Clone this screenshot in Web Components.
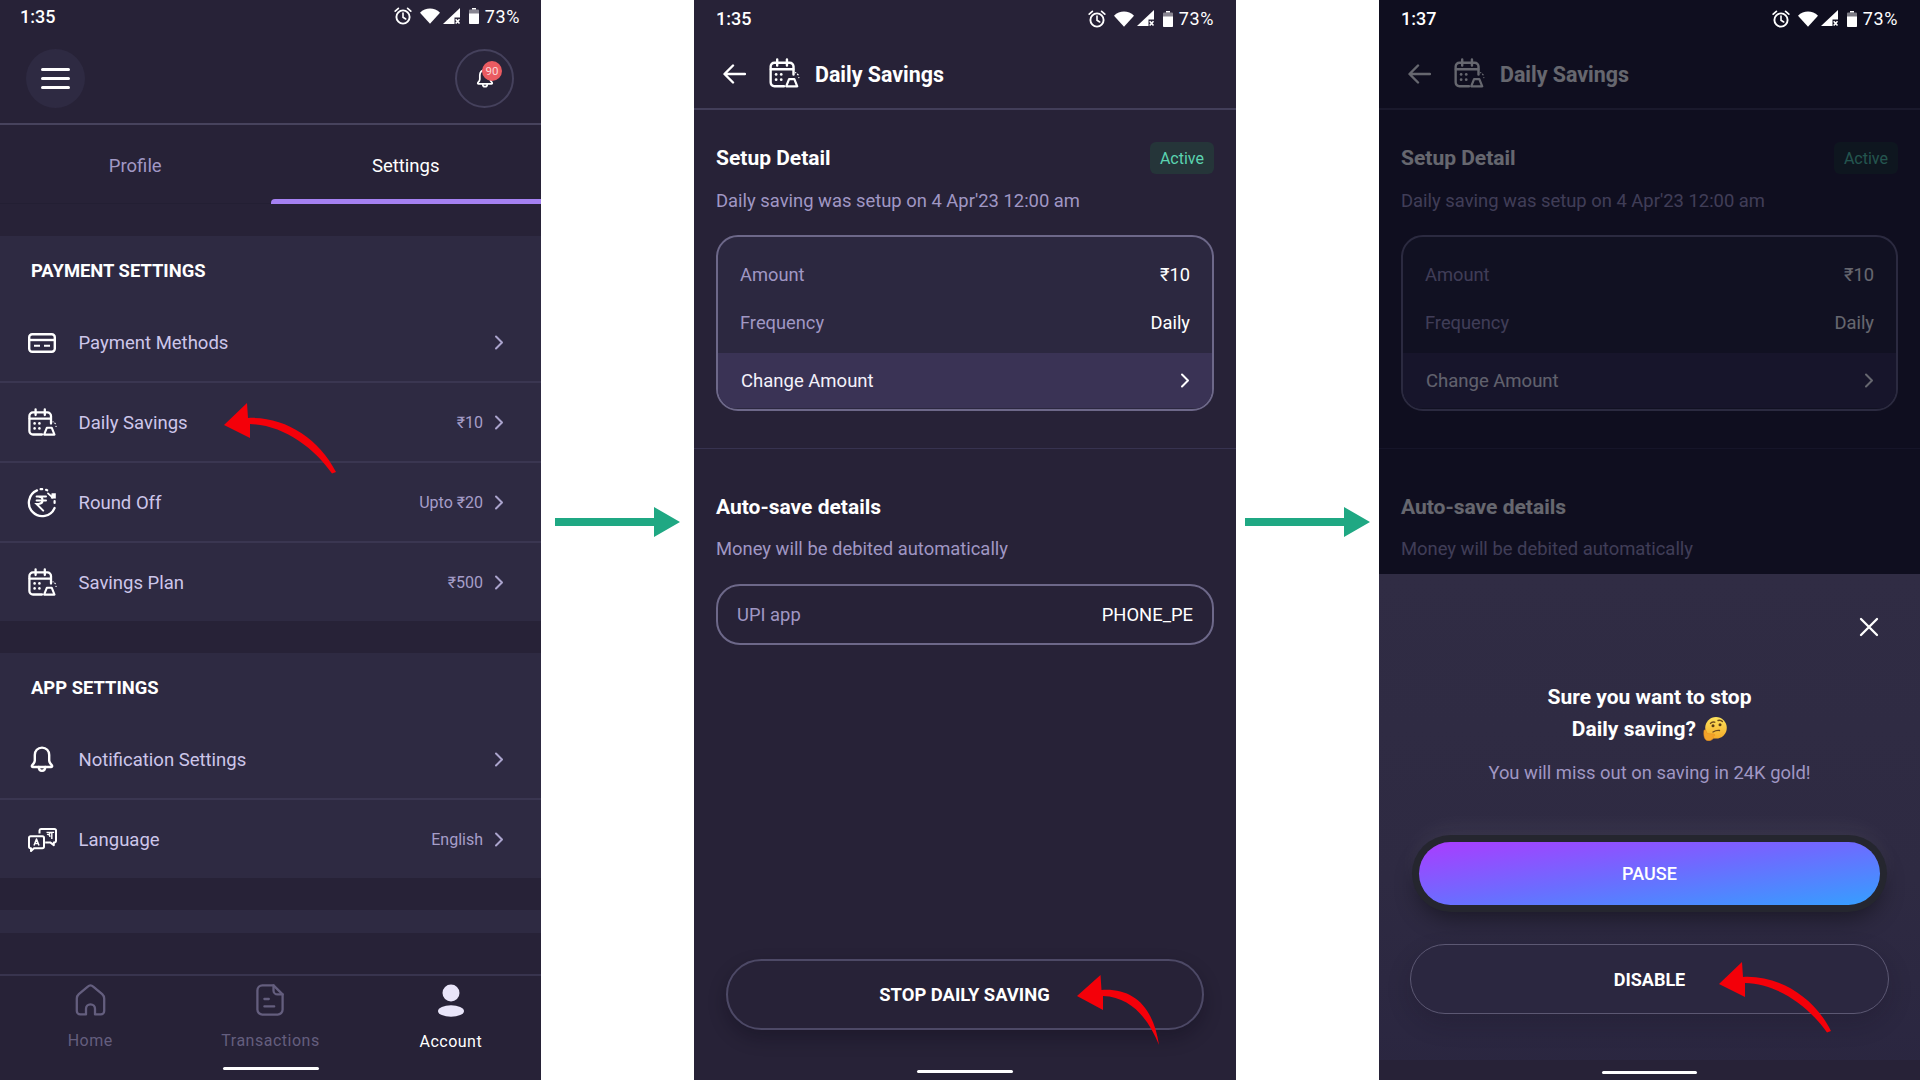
<!DOCTYPE html>
<html>
<head>
<meta charset="utf-8">
<title>Daily Savings</title>
<style>
  html, body { margin: 0; height: 1080px; overflow: hidden; background: #fff; font-family: Roboto, "Noto Sans", sans-serif; }
  .page { display: flex; width: 1920px; height: 1080px; }
</style>
</head>
<body>
<div class="page">
  <settings-screen></settings-screen>
  <flow-arrow style="width:153px"></flow-arrow>
  <savings-screen time="1:35" style="width:542px">
    <red-arrow style="left:383px;top:975px" kind="thin"></red-arrow>
  </savings-screen>
  <flow-arrow style="width:143px"></flow-arrow>
  <savings-screen time="1:37" dimmed style="width:541px">
    <stop-sheet slot="sheet"></stop-sheet>
    <red-arrow style="left:340px;top:962px"></red-arrow>
  </savings-screen>
</div>

<script>
// inline icons, all drawn on their own viewBox
const ICONS = {
  card: `<svg viewBox="0 0 28 20" width="28" height="20" fill="none" stroke="currentColor" stroke-width="2.4"><rect x="1.2" y="1.2" width="25.6" height="17.6" rx="3"/><path d="M1.2 7h25.6"/><path d="M6 12.8h6M16 12.8h6" stroke-width="2"/></svg>`,
  cal: `<svg viewBox="0 0 29 30" width="29" height="30" fill="none" stroke="currentColor" stroke-width="2.3" stroke-linecap="round" stroke-linejoin="round"><path d="M14 26.500H5a3.600 3.600 0 0 1-3.600-3.600V8a3.600 3.600 0 0 1 3.600-3.600h14.400A3.600 3.600 0 0 1 23 8v7.500"/><path d="M1.600 10.600h21.200M7.600 1.400v5.600M16.800 1.400v5.600"/><g fill="currentColor" stroke="none"><circle cx="6.600" cy="15.400" r="1.300"/><circle cx="11.400" cy="15.400" r="1.300"/><circle cx="6.600" cy="20.400" r="1.300"/><circle cx="11.400" cy="20.400" r="1.300"/></g><path d="M18.800 19.800h5l2.700 6.800H16.100z" stroke-width="2.100"/><path d="M26.800 15.200l.5.5M25 13.800h.1M28 18.400h.1" stroke-width="1.200"/></svg>`,
  round: `<svg viewBox="0 0 30 31" width="30" height="31" fill="none" stroke="currentColor" stroke-width="2.300" stroke-linecap="round"><path d="M10 3.400A13.400 13.400 0 1 0 27.600 21"/><path d="M13.600 2.200h1.600M19 2.800l1.200.5" stroke-width="2.200"/><path d="M9.600 9.600h9.400M9.600 13.600h9.400M12 9.800c4.400 0 5.400 6.600-.4 7.200h-2l6.600 6.600" stroke-width="2"/><path d="M21 6.400l4.600 4.200" stroke-width="1.800"/><path d="M24.600 6.200h4.200v5.200h-5z" fill="currentColor" stroke="none"/><path d="M27.600 16v-2" stroke-width="2.200"/></svg>`,
  bell: `<svg viewBox="0 0 24 27" width="24" height="27" fill="none" stroke="currentColor" stroke-width="2.400" stroke-linecap="round" stroke-linejoin="round"><path d="M12 1.600c-4.400 0-7.200 3.200-7.200 7.400v5.600c0 2-1 3-2.600 4.600-.7.800-.2 1.800.8 1.800h18c1 0 1.500-1 .8-1.800-1.600-1.600-2.600-2.600-2.600-4.600V9c0-4.200-2.800-7.400-7.200-7.400z"/><path d="M8.800 21c0 5.200 6.400 5.200 6.400 0"/></svg>`,
  lang: `<svg viewBox="0 0 29 24" width="29" height="24" fill="none" stroke="currentColor" stroke-width="2" stroke-linejoin="round"><path d="M11.500 5.500V2.600A1.600 1.600 0 0 1 13 1h13.400A1.600 1.600 0 0 1 28 2.600v10.200a1.600 1.600 0 0 1-1.600 1.600h-.6v2.800l-3.600-2.800h-5"/><path d="M2.600 8.200h11.800a1.600 1.600 0 0 1 1.600 1.600v8.800a1.600 1.600 0 0 1-1.600 1.600H6l-3 2.800v-2.800h-.4A1.600 1.600 0 0 1 1 18.600V9.800a1.600 1.600 0 0 1 1.600-1.600z" fill="#2e2a42"/><path d="M6 17.600l2.500-6.600 2.500 6.600M7 15.600h3" stroke-width="1.500"/><path d="M18.500 4.400h3.400c.4 1.600-1 2.200-2.400 2 1.800 0 2.800 1 2.200 2.600M23.800 3.800v7.200M21.500 4.400h4.600" stroke-width="1.400"/></svg>`,
  home: `<svg viewBox="0 0 31 32" width="31" height="32" fill="none" stroke="currentColor" stroke-width="2.300" stroke-linejoin="round"><path d="M11 30.400H5.200a3.400 3.400 0 0 1-3.400-3.400V14.600c0-1.800.7-3.200 2-4.400l9-7.600a4 4 0 0 1 5.400 0l9 7.600c1.300 1.200 2 2.600 2 4.400V27a3.400 3.400 0 0 1-3.400 3.400H20v-5.600a4.500 4.500 0 0 0-9 0z"/></svg>`,
  doc: `<svg viewBox="0 0 28 32" width="28" height="32" fill="none" stroke="currentColor" stroke-width="2.300" stroke-linecap="round" stroke-linejoin="round"><path d="M17.500 1.400H6.400a5 5 0 0 0-5 5v19.200a5 5 0 0 0 5 5h15.200a5 5 0 0 0 5-5V10.400z"/><path d="M17.500 1.400v5a4 4 0 0 0 4 4h5.100"/><path d="M8.400 15h4.400M8.400 22.400h9.800"/></svg>`,
  user: `<svg viewBox="0 0 28 33" width="28" height="33" fill="#e9e5f9"><circle cx="14" cy="9" r="8.500"/><ellipse cx="14" cy="27" rx="13" ry="5.700"/></svg>`,
  chev: `<svg viewBox="0 0 10 15" width="10" height="15" fill="none" stroke="currentColor" stroke-width="2" stroke-linecap="round" stroke-linejoin="round"><path d="M2 1.500l6 6-6 6"/></svg>`,
  back: `<svg viewBox="0 0 23 20" width="23" height="20" fill="none" stroke="currentColor" stroke-width="2.400" stroke-linecap="round" stroke-linejoin="round"><path d="M22 10H2M10 1.500L1.500 10l8.500 8.500"/></svg>`,
  close: `<svg viewBox="0 0 20 20" width="20" height="20" fill="none" stroke="currentColor" stroke-width="2.300" stroke-linecap="round"><path d="M2 2l16 16M18 2L2 18"/></svg>`,
  alarm: `<svg viewBox="0 0 18 18" width="18" height="18" fill="none" stroke="currentColor" stroke-width="1.900" stroke-linecap="round"><circle cx="9" cy="10" r="6.600"/><path d="M9 6v4.300l2.700 1.700" stroke-width="1.600"/><path d="M1.200 4.200L4.400 1.400M16.800 4.200l-3.200-2.800" stroke-width="1.700"/></svg>`,
  wifi: `<svg viewBox="0 0 20 16" width="20" height="16" fill="currentColor"><path d="M0 4.800C5.600-.8 14.400-.8 20 4.800L10 15.800z"/></svg>`,
  signal: `<svg viewBox="0 0 18 17" width="18" height="17"><path d="M17 0v9.500h-5.500V16H0z" fill="currentColor"/><path d="M12.700 11.200l3.800 4.300M16.500 11.200l-3.800 4.300" stroke="currentColor" stroke-width="1.600"/></svg>`,
  battery: `<svg viewBox="0 0 10 16" width="10" height="16" fill="currentColor"><path d="M3 0h4v1.500H3z"/><path d="M1 1.500h8a1 1 0 0 1 1 1V15a1 1 0 0 1-1 1H1a1 1 0 0 1-1-1V2.500a1 1 0 0 1 1-1z" opacity=".45"/><path d="M0 5.500h10V15a1 1 0 0 1-1 1H1a1 1 0 0 1-1-1z"/></svg>`,
  think: `<svg viewBox="0 0 24 24" width="24" height="24"><defs><linearGradient id="f" x1="0" y1="0" x2="0" y2="1"><stop offset="0" stop-color="#fde35c"/><stop offset="1" stop-color="#f5ac2a"/></linearGradient></defs><circle cx="13" cy="10.800" r="10.800" fill="url(#f)"/><path d="M7.500 6.400c1-1.300 2.700-1.700 4.200-1.200M15 3.500c1.600-.6 3.300-.2 4.400 1" fill="none" stroke="#6e4a1c" stroke-width="1.400" stroke-linecap="round"/><circle cx="10" cy="8.800" r="1.500" fill="#5b3c17"/><circle cx="17" cy="7.800" r="1.500" fill="#5b3c17"/><path d="M10 15c2-1.200 4.200-1.800 6.500-1.500" fill="none" stroke="#6e4a1c" stroke-width="1.400" stroke-linecap="round"/><path d="M1 13.500c.6-1.200 1.800-.8 2.200.2l1 2.800 6.800.6c1.200.2 1.200 1.600.2 1.800l-1.600.3c1.200.5 1.200 2 .4 2.600-1.300 1.500-3.400 2.300-5.200 2C1.800 23.400.2 19 1 13.500z" fill="#f3a32a" stroke="#e98f1c" stroke-width=".5"/></svg>`
};

class AppIcon extends HTMLElement {
  connectedCallback() {
    this.attachShadow({ mode: "open" });
    this.shadowRoot.innerHTML = `<style>:host{display:inline-flex;align-items:center;justify-content:center;line-height:0}</style>${ICONS[this.getAttribute("name")]}`;
  }
}

class StatusBar extends HTMLElement {
  connectedCallback() {
    this.attachShadow({ mode: "open" });
    this.shadowRoot.innerHTML = `
      <style>
        :host { display: flex; align-items: center; position: relative; z-index: 3; color: #fff; font-size: 18px; font-weight: 500; }
        .time { flex: 1; }
        .icons { display: flex; align-items: center; }
        .pct { font-weight: 400; letter-spacing: .6px; margin-left: 6px; }
        app-icon[name=alarm] { margin-right: 8px; }
        app-icon[name=wifi] { margin-right: 3px; }
        app-icon[name=signal] { margin-right: 8px; }
      </style>
      <span class="time">${this.getAttribute("time")}</span>
      <span class="icons">
        <app-icon name="alarm"></app-icon><app-icon name="wifi"></app-icon><app-icon name="signal"></app-icon><app-icon name="battery"></app-icon>
        <span class="pct">73%</span>
      </span>`;
  }
}

class SetRow extends HTMLElement {
  connectedCallback() {
    this.attachShadow({ mode: "open" });
    const val = this.getAttribute("value") || "";
    this.shadowRoot.innerHTML = `
      <style>
        :host { display: flex; align-items: center; height: 80px; box-sizing: border-box; padding: 1px 37px 0 27px; border-bottom: 2px solid #3a3651; color: #cdc6ea; font-size: 18.5px; }
        :host([last]) { height: 78px; border-bottom: 0; }
        .ic { width: 30px; margin-right: 21.5px; color: #fff; display: flex; justify-content: center; }
        .lab { flex: 1; }
        .val { color: #a69ec9; font-size: 16px; margin-right: 11px; }
        app-icon[name=chev] { color: #aba4cd; }
      </style>
      <span class="ic"><slot name="icon"></slot></span>
      <span class="lab"><slot></slot></span>
      <span class="val">${val}</span>
      <app-icon name="chev"></app-icon>`;
  }
}

class SetSection extends HTMLElement {
  connectedCallback() {
    this.attachShadow({ mode: "open" });
    this.shadowRoot.innerHTML = `
      <style>
        :host { display: block; background: #2e2a42; }
        h2 { margin: 0; height: 67px; box-sizing: border-box; padding: 2px 0 0 31px; display: flex; align-items: center; color: #fff; font-size: 18.4px; font-weight: 700; }
      </style>
      <h2>${this.getAttribute("title")}</h2>
      <slot></slot>`;
  }
}

class TabBar extends HTMLElement {
  connectedCallback() {
    this.attachShadow({ mode: "open" });
    this.shadowRoot.innerHTML = `
      <style>
        :host { display: flex; height: 79px; border-bottom: 1px solid #231f33; box-sizing: border-box; }
        .tab { flex: 1; display: flex; align-items: center; justify-content: center; padding-top: 3px; font-size: 18.5px; color: #a198c5; position: relative; }
        .tab.on { color: #fff; }
        .tab.on::after { content: ""; position: absolute; left: 0; right: 0; bottom: -1px; height: 5px; background: #a581f2; border-radius: 4px 0 0 0; }
      </style>
      <div class="tab">Profile</div>
      <div class="tab on">Settings</div>`;
  }
}

class BottomNav extends HTMLElement {
  connectedCallback() {
    this.attachShadow({ mode: "open" });
    this.shadowRoot.innerHTML = `
      <style>
        :host { display: block; height: 106px; box-sizing: border-box; border-top: 2px solid #38344e; background: #272237; }
        .items { display: grid; grid-template-columns: repeat(3, 1fr); padding-top: 8px; }
        .it { display: flex; flex-direction: column; align-items: center; color: #645e7e; font-size: 16px; letter-spacing: .5px; gap: 14.5px; }
        .it.on { color: #fff; }
        .bar { width: 96px; height: 3px; border-radius: 2px; background: #fff; margin: 16px auto 0; }
      </style>
      <div class="items">
        <div class="it"><app-icon name="home"></app-icon><span>Home</span></div>
        <div class="it"><app-icon name="doc"></app-icon><span>Transactions</span></div>
        <div class="it on"><app-icon name="user"></app-icon><span>Account</span></div>
      </div>
      <div class="bar"></div>`;
  }
}

class SettingsScreen extends HTMLElement {
  connectedCallback() {
    this.attachShadow({ mode: "open" });
    this.shadowRoot.innerHTML = `
      <style>
        :host { display: flex; flex-direction: column; flex: none; width: 541px; height: 1080px; background: #272237; position: relative; overflow: hidden; }
        status-bar { height: 32px; padding: 0 21px 0 20px; }
        .tool { display: flex; justify-content: space-between; align-items: center; height: 93px; padding: 2px 27px 0 25.5px; border-bottom: 2px solid #47435d; box-sizing: border-box; }
        .round { width: 59px; height: 59px; border-radius: 50%; background: #2e2a42; display: flex; align-items: center; justify-content: center; position: relative; box-sizing: border-box; }
        .menu { flex-direction: column; }
        .menu i { display: block; width: 29px; height: 3px; border-radius: 2px; background: #fff; margin: 3px 0; }
        .ring { background: #29253a; border: 2px solid #45415c; color: #fff; }
        .ring app-icon { transform: scale(.72); }
        .badge { position: absolute; left: 25px; top: 10px; width: 20px; height: 20px; border-radius: 50%; background: #ea5b61; color: #fbd5d6; font-size: 11.5px; display: flex; align-items: center; justify-content: center; }
        .gap { height: 32px; flex: none; }
        .strip { height: 23px; background: #2e2a42; flex: none; }
        .fill { flex: 1; }
      </style>
      <status-bar time="1:35"></status-bar>
      <div class="tool">
        <div class="round menu"><i></i><i></i><i></i></div>
        <div class="round ring"><app-icon name="bell"></app-icon><span class="badge">90</span></div>
      </div>
      <tab-bar></tab-bar>
      <div class="gap"></div>
      <set-section title="PAYMENT SETTINGS">
        <set-row><app-icon slot="icon" name="card"></app-icon>Payment Methods</set-row>
        <set-row value="₹10"><app-icon slot="icon" name="cal"></app-icon>Daily Savings</set-row>
        <set-row value="Upto ₹20"><app-icon slot="icon" name="round"></app-icon>Round Off</set-row>
        <set-row last value="₹500"><app-icon slot="icon" name="cal"></app-icon>Savings Plan</set-row>
      </set-section>
      <div class="gap"></div>
      <set-section title="APP SETTINGS">
        <set-row><app-icon slot="icon" name="bell"></app-icon>Notification Settings</set-row>
        <set-row last value="English"><app-icon slot="icon" name="lang"></app-icon>Language</set-row>
      </set-section>
      <div class="gap"></div>
      <div class="strip"></div>
      <div class="fill"></div>
      <bottom-nav></bottom-nav>
      <red-arrow style="left:224px;top:403px"></red-arrow>`;
  }
}

class SavingsScreen extends HTMLElement {
  connectedCallback() {
    this.attachShadow({ mode: "open" });
    const dim = this.hasAttribute("dimmed");
    // the dimmed copy has its lower half behind the sheet, so those parts are left out
    const lower = dim ? "" : `
      <div class="upi"><span>UPI app</span><span>PHONE_PE</span></div>`;
    const bottom = dim ? "" : `
      <div class="fill"></div>
      <div class="stop">STOP DAILY SAVING</div>
      <div class="bar"></div>`;
    this.shadowRoot.innerHTML = `
      <style>
        :host { display: flex; flex-direction: column; flex: none; height: 1080px; background: #272237; position: relative; overflow: hidden; color: #fff; }
        status-bar { height: 37px; padding: 0 22px; flex: none; }
        .head { display: flex; align-items: center; height: 73px; flex: none; box-sizing: border-box; padding: 3px 0 0 29px; border-bottom: 2px solid #423e59; font-size: 21.4px; font-weight: 700; }
        .head app-icon[name=cal] { margin: 0 16px 0 24px; transform: scale(1.06); }
        .sec { padding: 32px 22px 37px; border-bottom: 1px solid #373350; }
        .sec.two { padding-top: 46px; border: 0; }
        .tr { display: flex; align-items: center; justify-content: space-between; height: 32px; }
        h3 { margin: 0; font-size: 21px; font-weight: 700; }
        .active { height: 32px; box-sizing: border-box; padding: 0 10px; display: flex; align-items: center; background: #253539; color: #5bd3b0; font-size: 16px; border-radius: 6px; }
        .sub { margin-top: 15px; height: 24px; line-height: 24px; font-size: 18.4px; color: #a097c4; }
        .sec.two .sub { margin-top: 18px; }
        .card { margin-top: 22px; border: 2px solid #6d6889; border-radius: 22px; background: #2c2840; overflow: hidden; padding-top: 13px; height: 176px; box-sizing: border-box; }
        .kv { display: flex; justify-content: space-between; align-items: center; height: 48.5px; padding: 0 22px; font-size: 18.3px; }
        .kv span:first-child { color: #a097c4; }
        .chg { display: flex; align-items: center; justify-content: space-between; height: 55px; margin-top: 6px; padding: 0 22px 0 23px; background: #3a3355; color: #f3f1fb; font-size: 18.5px; }
        .chg app-icon { color: #fff; }
        .upi { margin-top: 23px; height: 61px; box-sizing: border-box; border: 2px solid #6d6889; border-radius: 24px; display: flex; align-items: center; justify-content: space-between; padding: 0 19px; font-size: 18.4px; }
        .upi span:first-child { color: #a097c4; }
        .fill { flex: 1; }
        .stop { align-self: flex-start; margin-left: 31.5px; width: 478px; height: 71px; box-sizing: border-box; border: 2px solid #4d4966; border-radius: 36px; display: flex; align-items: center; justify-content: center; font-size: 18.4px; font-weight: 700; box-shadow: 0 8px 18px rgba(10,8,20,.3); }
        .bar { width: 96px; height: 3px; border-radius: 2px; background: #fff; margin: 40px auto 7px; }
        .scrim { position: absolute; inset: 0; background: rgba(0,2,15,.6); z-index: 1; display: ${dim ? "block" : "none"}; }
        ::slotted([slot=sheet]) { position: absolute; left: 0; right: 0; top: 574px; bottom: 0; z-index: 2; }
      </style>
      <status-bar time="${this.getAttribute("time")}"></status-bar>
      <div class="head"><app-icon name="back"></app-icon><app-icon name="cal"></app-icon>Daily Savings</div>
      <div class="sec">
        <div class="tr"><h3>Setup Detail</h3><span class="active">Active</span></div>
        <div class="sub">Daily saving was setup on 4 Apr'23 12:00 am</div>
        <div class="card">
          <div class="kv"><span>Amount</span><span>₹10</span></div>
          <div class="kv"><span>Frequency</span><span>Daily</span></div>
          <div class="chg"><span>Change Amount</span><app-icon name="chev"></app-icon></div>
        </div>
      </div>
      <div class="sec two">
        <h3>Auto-save details</h3>
        <div class="sub">Money will be debited automatically</div>${lower}
      </div>${bottom}
      <div class="scrim"></div>
      <slot name="sheet"></slot>
      <slot></slot>`;
  }
}

class StopSheet extends HTMLElement {
  connectedCallback() {
    this.attachShadow({ mode: "open" });
    this.shadowRoot.innerHTML = `
      <style>
        :host { display: flex; flex-direction: column; background: linear-gradient(#302c44 0, #2e2a42 60%, #2a2640 100%); color: #fff; text-align: center; }
        .x { align-self: flex-end; margin: 43px 41px 0 0; line-height: 0; }
        h3 { margin: 44px 0 0; font-size: 21px; line-height: 32px; font-weight: 700; }
        h3 app-icon { vertical-align: -5px; margin-left: 2px; }
        p { margin: 16px 0 0; font-size: 18.4px; line-height: 24px; color: #a097c4; }
        .btn { display: flex; align-items: center; justify-content: center; box-sizing: border-box; border-radius: 36px; font-size: 18px; }
        .pause { height: 63px; margin: 57px 40px 0; font-weight: 500; background: linear-gradient(to bottom right, #aa3cff, #6c6cff 50%, #359fff); box-shadow: 0 0 0 7px #25262f, 0 12px 24px rgba(0,0,0,.45), 0 -10px 26px rgba(255,255,255,.08); }
        .dis { height: 70px; margin: 39px 31px 0; font-weight: 700; border: 1px solid #5c5873; background: #2b2740; box-shadow: 0 10px 24px rgba(20,16,32,.2); }
        .fill { flex: 1; }
        .foot { height: 20px; box-sizing: border-box; background: #272237; padding-top: 11px; }
        .foot i { display: block; width: 95px; height: 3px; border-radius: 2px; background: #fff; margin: 0 auto; }
      </style>
      <div class="x"><app-icon name="close"></app-icon></div>
      <h3>Sure you want to stop<br>Daily saving? <app-icon name="think"></app-icon></h3>
      <p>You will miss out on saving in 24K gold!</p>
      <div class="btn pause">PAUSE</div>
      <div class="btn dis">DISABLE</div>
      <div class="fill"></div>
      <div class="foot"><i></i></div>`;
  }
}

class FlowArrow extends HTMLElement {
  connectedCallback() {
    this.attachShadow({ mode: "open" });
    this.shadowRoot.innerHTML = `
      <style>:host { display: flex; flex: none; align-items: center; justify-content: center; height: 1080px; } svg { margin-top: -36px; }</style>
      <svg viewBox="0 0 125 30" width="125" height="30"><path d="M0 11h99V0l26 15-26 15V19H0z" fill="#1fa883"/></svg>`;
  }
}

class RedArrow extends HTMLElement {
  connectedCallback() {
    this.attachShadow({ mode: "open" });
    const d = this.getAttribute("kind") === "thin"
      ? "M0 21L23.500 0 24.500 15C55 13 76 30 82 70 72 45 55 22 26 21L26 35Z"
      : "M0 22L23 0 24 15C60 13 95 35 112 69L108 70.500C90 45 60 22 26 21L26 35Z";
    this.shadowRoot.innerHTML = `
      <style>:host { position: absolute; display: block; line-height: 0; z-index: 4; }</style>
      <svg viewBox="0 0 114 72" width="114" height="72"><path d="${d}" fill="#f40009"/></svg>`;
  }
}

customElements.define("app-icon", AppIcon);
customElements.define("status-bar", StatusBar);
customElements.define("set-row", SetRow);
customElements.define("set-section", SetSection);
customElements.define("tab-bar", TabBar);
customElements.define("bottom-nav", BottomNav);
customElements.define("settings-screen", SettingsScreen);
customElements.define("savings-screen", SavingsScreen);
customElements.define("stop-sheet", StopSheet);
customElements.define("flow-arrow", FlowArrow);
customElements.define("red-arrow", RedArrow);
</script>
</body>
</html>
